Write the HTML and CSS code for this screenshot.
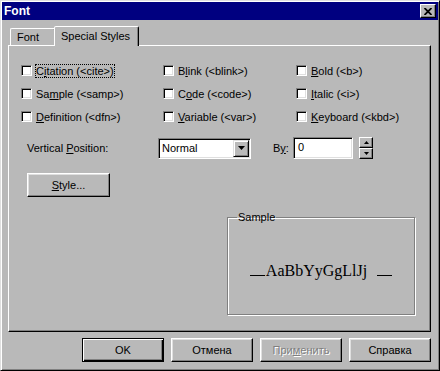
FILE: index.html
```html
<!DOCTYPE html>
<html lang="ru">
<head>
    <meta charset="UTF-8">
    <meta name="viewport" content="width=device-width, initial-scale=1.0">
    <title>Font</title>
    <link rel="stylesheet" href="styles.css">
</head>
<body>
    <div class="window">
        <div class="titlebar">
            <span class="title">Font</span>
            <button class="close-btn">
                <svg width="8" height="7" viewBox="0 0 8 7"><path d="M0.5 0 L7.5 7 M7.5 0 L0.5 7" stroke="#000" stroke-width="1.8"/></svg>
            </button>
        </div>

        <div class="content">
            <div class="tabs">
                <div class="tab">Font</div>
                <div class="tab active">Special Styles</div>
            </div>

            <div class="panel">
                <div class="checks">
                    <label class="check"><span class="box"></span><span class="text focused">C<u>i</u>tation (&lt;cite&gt;)</span></label>
                    <label class="check"><span class="box"></span><span class="text">B<u>l</u>ink (&lt;blink&gt;)</span></label>
                    <label class="check"><span class="box"></span><span class="text"><u>B</u>old (&lt;b&gt;)</span></label>
                    <label class="check"><span class="box"></span><span class="text">Sa<u>m</u>ple (&lt;samp&gt;)</span></label>
                    <label class="check"><span class="box"></span><span class="text">C<u>o</u>de (&lt;code&gt;)</span></label>
                    <label class="check"><span class="box"></span><span class="text"><u>I</u>talic (&lt;i&gt;)</span></label>
                    <label class="check"><span class="box"></span><span class="text"><u>D</u>efinition (&lt;dfn&gt;)</span></label>
                    <label class="check"><span class="box"></span><span class="text"><u>V</u>ariable (&lt;var&gt;)</span></label>
                    <label class="check"><span class="box"></span><span class="text"><u>K</u>eyboard (&lt;kbd&gt;)</span></label>
                </div>

                <div class="position-row">
                    <span class="position-label">Vertical <u>P</u>osition:</span>
                    <div class="combo">
                        <span class="combo-value">Normal</span>
                        <span class="combo-drop"><svg width="7" height="4" viewBox="0 0 7 4"><path d="M0 0h7L3.5 4z" fill="#000"/></svg></span>
                    </div>
                    <span class="by-label">B<u>y</u>:</span>
                    <div class="edit">0</div>
                    <div class="spin">
                        <span class="spin-btn"><svg width="5" height="3" viewBox="0 0 5 3"><path d="M2.5 0L5 3H0z" fill="#000"/></svg></span>
                        <span class="spin-btn"><svg width="5" height="3" viewBox="0 0 5 3"><path d="M0 0h5L2.5 3z" fill="#000"/></svg></span>
                    </div>
                </div>

                <button class="btn style-btn"><u>S</u>tyle...</button>

                <fieldset class="sample">
                    <legend>Sample</legend>
                    <div class="sample-body">
                        <span class="line"></span>
                        <span class="sample-text">AaBbYyGgLlJj</span>
                        <span class="line right"></span>
                    </div>
                </fieldset>
            </div>

            <div class="actions">
                <button class="btn default">OK</button>
                <button class="btn">Отмена</button>
                <button class="btn disabled">При<u>м</u>енить</button>
                <button class="btn">Справка</button>
            </div>
        </div>
    </div>
</body>
</html>
```

FILE: styles.css
```css
body {
    margin: 0;
    background: #b9b9b9;
    font-family: "Liberation Sans", Arial, sans-serif;
    font-size: 11px;
    color: #000;
}

.window {
    width: 440px;
    height: 371px;
    box-sizing: border-box;
    padding: 1px;
    background: #b9b9b9;
    border: 1px solid;
    border-color: #dfdfdf #000 #000 #dfdfdf;
    box-shadow: inset 1px 1px #fff, inset -1px -1px #808080;
}

.titlebar {
    height: 18px;
    background: #000080;
    display: flex;
    align-items: center;
    justify-content: space-between;
    padding: 0 2px 0 2px;
}

.title {
    color: #fff;
    font-weight: bold;
    font-size: 12px;
}

.close-btn {
    width: 16px;
    height: 14px;
    padding: 0;
    background: #b9b9b9;
    border: 1px solid;
    border-color: #fff #000 #000 #fff;
    box-shadow: inset -1px -1px #808080;
    display: flex;
    align-items: center;
    justify-content: center;
}

.content {
    padding: 6px 7px 0 6px;
}

.tabs {
    display: flex;
    align-items: flex-end;
    height: 19px;
    padding-left: 2px;
}

.tab {
    height: 17px;
    line-height: 16px;
    box-sizing: border-box;
    width: 46px;
    padding-left: 6px;
    border: 1px solid;
    border-bottom: none;
    border-color: #fff #000 transparent #fff;
    border-radius: 2px 2px 0 0;
    box-shadow: inset -1px 0 #808080;
}

.tab.active {
    position: relative;
    z-index: 1;
    width: 85px;
    height: 20px;
    line-height: 18px;
    margin-left: -2px;
    margin-bottom: -1px;
    padding-left: 6px;
    background: #b9b9b9;
}

.panel {
    height: 287px;
    box-sizing: border-box;
    border: 1px solid;
    border-color: #fff #000 #000 #fff;
    box-shadow: inset -1px -1px #808080;
}

.checks {
    display: grid;
    grid-template-columns: 142px 133px 1fr;
    row-gap: 8px;
    padding: 17px 0 0 12px;
}

.check {
    display: flex;
    align-items: center;
    height: 15px;
}

.box {
    width: 11px;
    height: 11px;
    box-sizing: border-box;
    background: #fff;
    border: 1px solid;
    border-color: #808080 #fff #fff #808080;
    box-shadow: inset 1px 1px #000, inset -1px -1px #dfdfdf;
    margin-right: 3px;
}

.check .text {
    border: 1px dotted transparent;
    line-height: 12px;
}

.check .text.focused {
    border-color: #000;
}

.position-row {
    display: flex;
    align-items: center;
    height: 22px;
    margin: 13px 0 0 18px;
}

.position-label {
    width: 131px;
}

.combo,
.edit {
    box-sizing: border-box;
    background: #fff;
    border: 1px solid;
    border-color: #808080 #fff #fff #808080;
    box-shadow: inset 1px 1px #000, inset -1px -1px #dfdfdf;
}

.combo {
    width: 93px;
    height: 21px;
    display: flex;
    align-items: center;
    justify-content: space-between;
    padding: 1px;
}

.combo-value {
    padding-left: 2px;
}

.combo-drop {
    width: 16px;
    height: 17px;
    box-sizing: border-box;
    background: #b9b9b9;
    border: 1px solid;
    border-color: #dfdfdf #000 #000 #dfdfdf;
    box-shadow: inset 1px 1px #fff, inset -1px -1px #808080;
    display: flex;
    align-items: center;
    justify-content: center;
}

.by-label {
    width: 20px;
    margin-left: 22px;
}

.edit {
    width: 60px;
    height: 22px;
    padding: 3px 0 0 4px;
}

.spin {
    display: flex;
    flex-direction: column;
    margin-left: 6px;
}

.spin-btn {
    width: 14px;
    height: 11px;
    box-sizing: border-box;
    background: #b9b9b9;
    border: 1px solid;
    border-color: #fff #000 #000 #fff;
    box-shadow: inset -1px -1px #808080;
    display: flex;
    align-items: center;
    justify-content: center;
}

.btn {
    font: inherit;
    color: #000;
    height: 24px;
    width: 82px;
    padding: 0;
    background: #b9b9b9;
    border: 1px solid;
    border-color: #fff #000 #000 #fff;
    box-shadow: inset -1px -1px #808080, inset 1px 1px #dfdfdf;
}

.btn.default {
    border-color: #000;
    box-shadow: inset 1px 1px #fff, inset -1px -1px #000, inset -2px -2px #808080;
}

.btn.disabled {
    color: #808080;
    text-shadow: 1px 1px #fff;
}

.style-btn {
    display: block;
    width: 83px;
    margin: 14px 0 0 18px;
}

.sample {
    width: 188px;
    height: 104px;
    box-sizing: border-box;
    margin: 14px 0 0 218px;
    padding: 0;
    border: 1px solid #808080;
    box-shadow: 1px 1px #fff, inset 1px 1px #fff;
}

.sample legend {
    margin-left: 9px;
    padding: 0 1px;
}

.sample-body {
    height: 89px;
    display: flex;
    align-items: baseline;
    justify-content: center;
    padding-top: 6px;
    box-sizing: border-box;
}

.sample-body {
    align-content: center;
    flex-wrap: wrap;
}

.line {
    display: inline-block;
    width: 15px;
    height: 1px;
    background: #000;
    margin-right: 1px;
}

.line.right {
    margin: 0 0 0 10px;
}

.sample-text {
    font-family: "Liberation Serif", "Times New Roman", serif;
    font-size: 16px;
}

.actions {
    display: flex;
    justify-content: flex-end;
    gap: 7px;
    margin-top: 6px;
}
```
